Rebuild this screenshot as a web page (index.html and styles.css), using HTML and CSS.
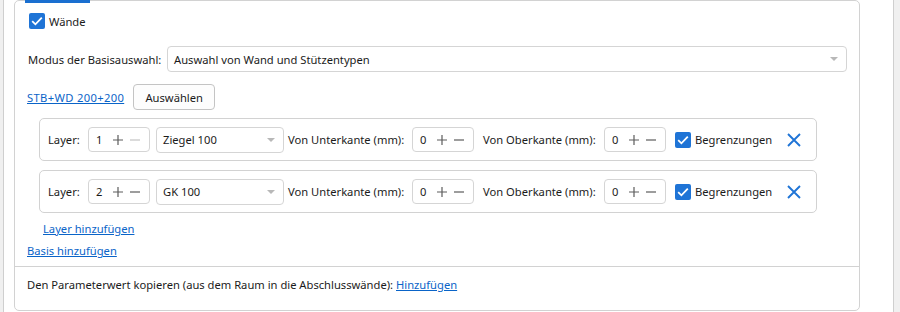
FILE: index.html
```html
<!DOCTYPE html>
<html lang="de">
<head>
    <title>Wände – Basis</title>
    <link rel="stylesheet" href="styles.css">
</head>
<body>
    <div class="panel">
        <div class="card">
            <div class="tab-mark"></div>
            <div class="content">
                <label class="check-row">
                    <span class="checkbox"><svg width="16" height="16" viewBox="0 0 16 16"><path d="M3.2 8.2 L6.4 11.3 L12.8 4.6" fill="none" stroke="#fff" stroke-width="1.8"/></svg></span>
                    <span>Wände</span>
                </label>

                <div class="mode-row">
                    <span class="mode-label">Modus der Basisauswahl:</span>
                    <div class="select wide">
                        <span>Auswahl von Wand und Stützentypen</span>
                        <span class="arrow"></span>
                    </div>
                </div>

                <div class="base-row">
                    <a href="#" class="link base-link">STB+WD 200+200</a>
                    <button class="btn">Auswählen</button>
                </div>

                <div class="layers">
                    <div class="layer">
                        <span class="lbl lbl-layer">Layer:</span>
                        <div class="spin">
                            <span class="val">1</span>
                            <svg class="ico" width="10" height="10" viewBox="0 0 10 10"><path d="M0 5 H10 M5 0 V10" stroke="#5c5c5c" stroke-width="1.2"/></svg>
                            <svg class="ico" width="10" height="10" viewBox="0 0 10 10"><path d="M0 5 H10" stroke="#c4c4c4" stroke-width="1.2"/></svg>
                        </div>
                        <div class="select combo">
                            <span>Ziegel 100</span>
                            <span class="arrow"></span>
                        </div>
                        <span class="lbl lbl-unter">Von Unterkante (mm):</span>
                        <div class="spin">
                            <span class="val">0</span>
                            <svg class="ico" width="10" height="10" viewBox="0 0 10 10"><path d="M0 5 H10 M5 0 V10" stroke="#5c5c5c" stroke-width="1.2"/></svg>
                            <svg class="ico" width="10" height="10" viewBox="0 0 10 10"><path d="M0 5 H10" stroke="#5c5c5c" stroke-width="1.2"/></svg>
                        </div>
                        <span class="lbl lbl-ober">Von Oberkante (mm):</span>
                        <div class="spin">
                            <span class="val">0</span>
                            <svg class="ico" width="10" height="10" viewBox="0 0 10 10"><path d="M0 5 H10 M5 0 V10" stroke="#5c5c5c" stroke-width="1.2"/></svg>
                            <svg class="ico" width="10" height="10" viewBox="0 0 10 10"><path d="M0 5 H10" stroke="#5c5c5c" stroke-width="1.2"/></svg>
                        </div>
                        <label class="limit">
                            <span class="checkbox"><svg width="16" height="16" viewBox="0 0 16 16"><path d="M3.2 8.2 L6.4 11.3 L12.8 4.6" fill="none" stroke="#fff" stroke-width="1.8"/></svg></span>
                            <span>Begrenzungen</span>
                        </label>
                        <svg class="remove" width="14" height="14" viewBox="0 0 14 14"><path d="M1 1 L13 13 M13 1 L1 13" stroke="#1f74d6" stroke-width="1.9"/></svg>
                    </div>

                    <div class="layer">
                        <span class="lbl lbl-layer">Layer:</span>
                        <div class="spin">
                            <span class="val">2</span>
                            <svg class="ico" width="10" height="10" viewBox="0 0 10 10"><path d="M0 5 H10 M5 0 V10" stroke="#5c5c5c" stroke-width="1.2"/></svg>
                            <svg class="ico" width="10" height="10" viewBox="0 0 10 10"><path d="M0 5 H10" stroke="#5c5c5c" stroke-width="1.2"/></svg>
                        </div>
                        <div class="select combo">
                            <span>GK 100</span>
                            <span class="arrow"></span>
                        </div>
                        <span class="lbl lbl-unter">Von Unterkante (mm):</span>
                        <div class="spin">
                            <span class="val">0</span>
                            <svg class="ico" width="10" height="10" viewBox="0 0 10 10"><path d="M0 5 H10 M5 0 V10" stroke="#5c5c5c" stroke-width="1.2"/></svg>
                            <svg class="ico" width="10" height="10" viewBox="0 0 10 10"><path d="M0 5 H10" stroke="#5c5c5c" stroke-width="1.2"/></svg>
                        </div>
                        <span class="lbl lbl-ober">Von Oberkante (mm):</span>
                        <div class="spin">
                            <span class="val">0</span>
                            <svg class="ico" width="10" height="10" viewBox="0 0 10 10"><path d="M0 5 H10 M5 0 V10" stroke="#5c5c5c" stroke-width="1.2"/></svg>
                            <svg class="ico" width="10" height="10" viewBox="0 0 10 10"><path d="M0 5 H10" stroke="#5c5c5c" stroke-width="1.2"/></svg>
                        </div>
                        <label class="limit">
                            <span class="checkbox"><svg width="16" height="16" viewBox="0 0 16 16"><path d="M3.2 8.2 L6.4 11.3 L12.8 4.6" fill="none" stroke="#fff" stroke-width="1.8"/></svg></span>
                            <span>Begrenzungen</span>
                        </label>
                        <svg class="remove" width="14" height="14" viewBox="0 0 14 14"><path d="M1 1 L13 13 M13 1 L1 13" stroke="#1f74d6" stroke-width="1.9"/></svg>
                    </div>
                </div>

                <a href="#" class="link add-layer">Layer hinzufügen</a>
                <a href="#" class="link add-base">Basis hinzufügen</a>
            </div>
            <div class="footer">
                Den Parameterwert kopieren (aus dem Raum in die Abschlusswände): <a href="#" class="link">Hinzufügen</a>
            </div>
        </div>
    </div>
</body>
</html>
```

FILE: styles.css
```css
body {
    margin: 0;
    padding: 0 6px 0 3px;
    background: #f0f0f0;
    font-family: "Noto Sans", "Open Sans", sans-serif;
    font-size: 11.2px;
    color: #1b1b1b;
    white-space: nowrap;
}
.panel {
    height: 312px;
    background: #fff;
    border-left: 1px solid #cfcfcf;
    border-right: 1px solid #cfcfcf;
    padding-left: 10px;
    box-sizing: border-box;
}
.card {
    position: relative;
    width: 846px;
    height: 311px;
    box-sizing: border-box;
    border: 1px solid #d2d2d2;
    border-radius: 5px;
}
.tab-mark {
    position: absolute;
    top: -1px;
    left: 10px;
    width: 65px;
    height: 3px;
    background: #1a6fd0;
}
.content {
    padding: 0 12px 0 12px;
}
.checkbox {
    display: inline-flex;
    width: 16px;
    height: 16px;
    background: #1f74d6;
    border-radius: 2px;
}
.check-row {
    display: flex;
    align-items: center;
    gap: 4px;
    height: 18px;
    margin-top: 11px;
    margin-left: 2px;
}
.mode-row {
    display: flex;
    align-items: center;
    margin-top: 16px;
}
.mode-label {
    width: 139px;
    margin-left: 1px;
}
.select {
    display: flex;
    align-items: center;
    justify-content: space-between;
    box-sizing: border-box;
    height: 26px;
    padding: 0 8px 0 6px;
    border: 1px solid #d5d5d5;
    border-radius: 4px;
    background: #fff;
}
.wide {
    flex: 1;
}
.arrow {
    width: 0;
    height: 0;
    border-left: 4px solid transparent;
    border-right: 4px solid transparent;
    border-top: 4px solid #b8b8b8;
}
.base-row {
    display: flex;
    align-items: center;
    gap: 9px;
    margin-top: 12px;
    height: 26px;
}
.link {
    color: #0a64c8;
    text-decoration: underline;
}
.base-link {
    letter-spacing: 0.35px;
}
.btn {
    width: 82px;
    height: 26px;
    font: inherit;
    color: #1b1b1b;
    background: #fdfdfd;
    border: 1px solid #c4c4c4;
    border-radius: 4px;
}
.layers {
    display: flex;
    flex-direction: column;
    gap: 9px;
    margin: 8px 30px 0 12px;
}
.layer {
    display: flex;
    align-items: center;
    height: 43px;
    box-sizing: border-box;
    padding-left: 8px;
    border: 1px solid #d2d2d2;
    border-radius: 5px;
}
.lbl-layer {
    width: 40px;
}
.spin {
    display: flex;
    align-items: center;
    box-sizing: border-box;
    width: 62px;
    height: 25px;
    padding-left: 7px;
    border: 1px solid #d5d5d5;
    border-radius: 4px;
}
.spin .val {
    width: 17px;
}
.spin .ico {
    margin-right: 7px;
}
.combo {
    width: 128px;
    margin: 0 4px 0 6px;
}
.lbl-unter {
    width: 124px;
}
.lbl-ober {
    width: 121px;
    margin-left: 9px;
}
.limit {
    display: flex;
    align-items: center;
    gap: 4px;
    margin-left: 9px;
}
.remove {
    margin-left: 15px;
}
.add-layer {
    display: block;
    width: max-content;
    margin: 8px 0 0 16px;
    line-height: 16px;
}
.add-base {
    display: block;
    width: max-content;
    margin: 6px 0 0 0;
    line-height: 16px;
}
.footer {
    margin-top: 7px;
    border-top: 1px solid #d2d2d2;
    padding: 10px 12px 0 12px;
    line-height: 16px;
}
```
